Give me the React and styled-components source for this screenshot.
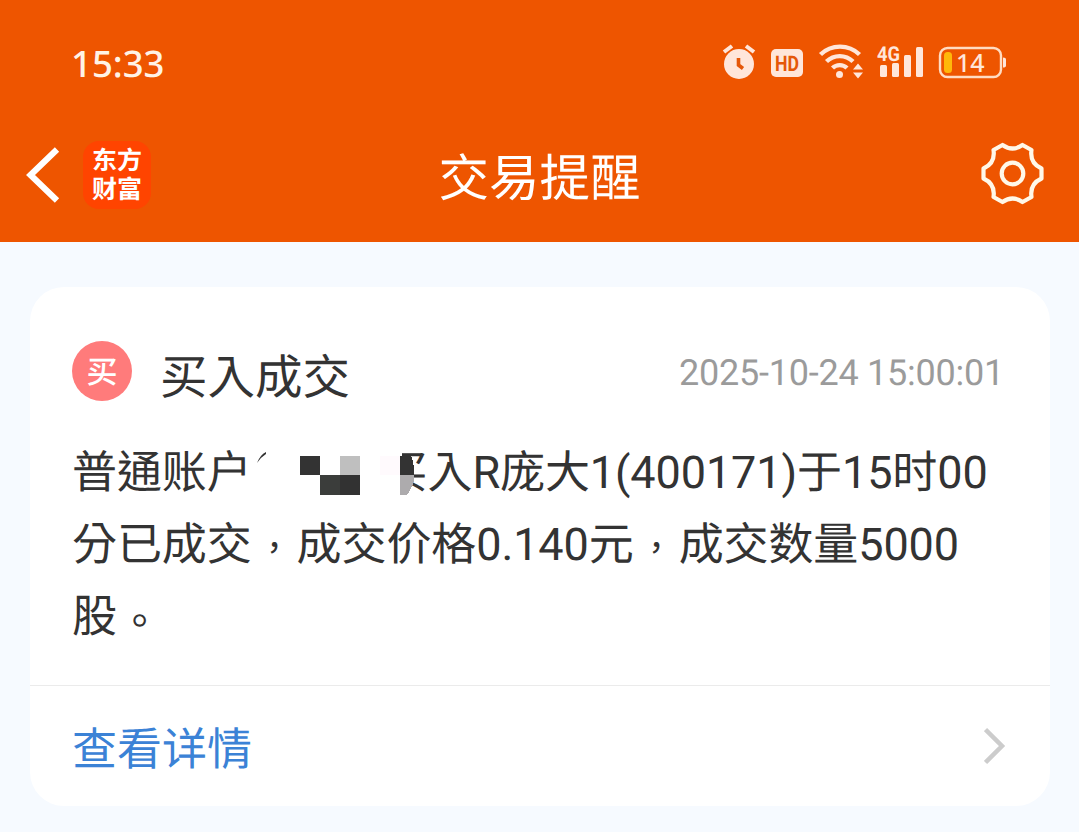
/**
*
* TradeReminder
*
*/

import React from 'react';
import styled, { createGlobalStyle } from 'styled-components';

const GlobalStyle = createGlobalStyle`
  * {
    box-sizing: border-box;
  }

  body {
    margin: 0;
    background: #f6faff;
    font-family: Roboto, 'Noto Sans CJK TC', sans-serif;
    color: #333;
    text-rendering: geometricPrecision;
  }

  svg {
    display: block;
  }
`;

const Page = styled.div`
  width: 1079px;
  height: 832px;
  overflow: hidden;
  background: #f6faff;
`;

const Header = styled.header`
  height: 242px;
  background: #ee5500;
  color: #fff;
`;

const StatusBar = styled.div`
  display: flex;
  align-items: center;
  justify-content: space-between;
  height: 126px;
  padding: 0 73px 0 71px;
`;

const Clock = styled.time`
  font: 500 36.5px/40px 'Noto Sans', sans-serif;
  color: #fff3e6;
`;

const StatusIcons = styled.svg`
  width: 285px;
  height: 40px;
`;

const IconText = styled.text`
  font-family: ${(props) => props.$family || 'Roboto'}, sans-serif;
  font-weight: ${(props) => props.$weight || 700};
  font-size: ${(props) => props.$size}px;
`;

const NavBar = styled.div`
  display: grid;
  grid-template-columns: 200px 1fr 200px;
  align-items: center;
  height: 98px;
`;

const NavLeft = styled.div`
  display: flex;
  align-items: center;
  gap: 22px;
  padding-left: 25px;
`;

const AppBadge = styled.div`
  display: flex;
  flex-direction: column;
  align-items: center;
  width: 68px;
  height: 68px;
  padding-top: 4px;
  border-radius: 16px;
  background: #ff4400;
  font: 700 25px/29px 'Noto Sans CJK SC', sans-serif;
`;

const Title = styled.h1`
  margin: 0;
  font-weight: 400;
  font-size: 50.5px;
  line-height: 72px;
  text-align: center;
  padding-top: 10px;
`;

const NavRight = styled.div`
  display: flex;
  justify-content: flex-end;
  padding: 0 34px 2px 0;
`;

const Card = styled.section`
  width: 1020px;
  height: 519px;
  margin: 45px 0 0 30px;
  border-radius: 34px;
  background: #fff;
`;

const CardBody = styled.div`
  height: 399px;
  padding: 49px 42px 0;
  border-bottom: 1px solid #ebebeb;
`;

const CardHead = styled.div`
  display: flex;
  align-items: center;
  height: 70px;
`;

const BuyTag = styled.span`
  width: 60px;
  height: 60px;
  padding-top: 2px;
  border-radius: 50%;
  background: #ff7b7b;
  color: #fff;
  font-weight: 500;
  font-size: 31px;
  line-height: 60px;
  text-align: center;
`;

const Heading = styled.h2`
  flex: 1;
  margin: 0;
  padding: 14px 0 0 28px;
  font-weight: 400;
  font-size: 47.5px;
  line-height: 64px;
`;

const DateText = styled.time`
  margin-right: 4px;
  padding-top: 3px;
  font-size: 36px;
  letter-spacing: -0.24px;
  color: #9b9b9b;
`;

const Message = styled.p`
  margin: 31px 0 0;
  font-size: 45px;
  line-height: 72px;
  letter-spacing: -0.1px;
  white-space: nowrap;
`;

const Masked = styled.span`
  position: relative;
  display: inline-block;
  width: 131px;
  height: 45px;
  vertical-align: top;
`;

// lies over the start of the text that follows it
const Mosaic = styled.svg`
  position: absolute;
  left: 0;
  top: 9px;
  width: 165px;
  height: 60px;
`;

const Mark = styled.span`
  display: inline-block;
  width: 45px;
  font-size: ${(props) => props.$size}px;
  line-height: 1;
  text-align: center;
  vertical-align: ${(props) => props.$shift}px;
`;

const CardLink = styled.div`
  display: flex;
  align-items: center;
  justify-content: space-between;
  height: 120px;
  padding: 0 44px 0 42px;
  font-size: 45px;
  color: #3b82d6;
`;

const LinkText = styled.span`
  padding-bottom: 1px;
`;

function Status() {
  return (
    <StatusIcons viewBox="721 43 285 40" fill="#ffe6da">
      <circle cx="739" cy="64" r="15" />
      <path d="M724 52l8-6M746 46l8 6" stroke="#ffe6da" strokeWidth="4" />
      <path d="M738.5 58v7l4.5 3.5" fill="none" stroke="#e55708" strokeWidth="3.6" />
      <rect x="771" y="49" width="32" height="28" rx="5" />
      <IconText x="787" y="71" $size={21.5} textAnchor="middle" textLength="24" lengthAdjust="spacingAndGlyphs" fill="#e55708">HD</IconText>
      <g fill="none" stroke="#ffe6da" strokeWidth="4.4">
        <path d="M820.5 54.5a28 28 0 0 1 39 0" />
        <path d="M826.5 61.5a19 19 0 0 1 26.5 0" />
        <path d="M832.5 68a10.500 10.500 0 0 1 14.500 0" />
      </g>
      <circle cx="839.5" cy="74.5" r="3.5" />
      <path d="M853 69.500l5-6 5 6zM853 72.500h10l-5 6z" />
      <IconText x="877" y="60.500" $size={20.5} textLength="23" lengthAdjust="spacingAndGlyphs">4G</IconText>
      <rect x="880" y="65" width="7" height="12" rx="1.5" />
      <rect x="892" y="63" width="7" height="14" rx="1.5" />
      <rect x="904" y="55" width="7" height="22" rx="1.5" />
      <rect x="916" y="47" width="7" height="30" rx="1.5" />
      <rect x="940" y="48" width="61" height="29" rx="7.5" fill="none" stroke="#ffdcc2" strokeWidth="2.4" />
      <rect x="944" y="52" width="8" height="21" rx="3.5" fill="#ffb80a" />
      <path d="M1003 57.500q3 0 3 2v6q0 2-3 2z" />
      <IconText x="956" y="71.500" $size={25} $family="'Noto Sans'" $weight={500}>14</IconText>
    </StatusIcons>
  );
}

function BackIcon() {
  return (
    <svg width="36" height="58" viewBox="25 146 36 58" fill="none" stroke="#fff" strokeWidth="6.2">
      <path d="M57 149.500L30.500 175L57 200.500" />
    </svg>
  );
}

function GearIcon() {
  return (
    <svg width="66" height="66" viewBox="979 141 66 66" fill="none" stroke="#fff8e8" strokeWidth="4.2" strokeLinejoin="round">
      <path d="M1002.500 145Q1012.500 152 1022.500 145L1031.500 150Q1029.500 163 1041.500 168.500V178.500Q1029.500 184 1031.500 197L1022.500 202Q1012.500 195 1002.500 202L993.500 197Q995.500 184 983.500 178.500V168.500Q995.500 163 993.500 150Z" />
      <circle cx="1012.500" cy="173.500" r="10.8" />
    </svg>
  );
}

function MaskedName() {
  return (
    <Masked>
      <Mosaic viewBox="252 446 165 60" shapeRendering="crispEdges">
        <path d="M380 446h22v60h-22zM400 495h7v6h-7z" fill="#fff" />
        <rect x="300" y="456" width="20" height="19" fill="#333" />
        <rect x="340" y="456" width="20" height="19" fill="#bfbfbf" />
        <rect x="320" y="475" width="20" height="20" fill="#3b3d3b" />
        <rect x="340" y="475" width="20" height="20" fill="#323232" />
        <rect x="380" y="456" width="20" height="19" fill="#fffafd" />
        <path d="M400 456h11q3 7 3.500 19H400z" fill="#333" />
        <path d="M400 475h14.500q-1 13-8 20H400z" fill="#adabad" />
        <path d="M257 463q3-8 9-11v2q-5 3-9 9z" fill="#333" shapeRendering="auto" />
      </Mosaic>
    </Masked>
  );
}

function App() {
  return (
    <Page>
      <GlobalStyle />
      <Header>
        <StatusBar>
          <Clock>15:33</Clock>
          <Status />
        </StatusBar>
        <NavBar>
          <NavLeft>
            <BackIcon />
            <AppBadge>
              <span>东方</span>
              <span>财富</span>
            </AppBadge>
          </NavLeft>
          <Title>交易提醒</Title>
          <NavRight><GearIcon /></NavRight>
        </NavBar>
      </Header>
      <Card>
        <CardBody>
          <CardHead>
            <BuyTag>买</BuyTag>
            <Heading>买入成交</Heading>
            <DateText>2025-10-24 15:00:01</DateText>
          </CardHead>
          <Message>
            普通账户<MaskedName />买入R庞大1(400171)于15时00<br />
            分已成交<Mark $size={34} $shift={0}>，</Mark>成交价格0.140元<Mark $size={34} $shift={0}>，</Mark>成交数量5000<br />
            股<Mark $size={41} $shift={-4}>。</Mark>
          </Message>
        </CardBody>
        <CardLink>
          <LinkText>查看详情</LinkText>
          <svg width="22" height="38" viewBox="0 0 22 38" fill="none" stroke="#ccc" strokeWidth="4.5">
            <path d="M1.500 2.500L18 19L1.500 35.500" />
          </svg>
        </CardLink>
      </Card>
    </Page>
  );
}

export default App;
